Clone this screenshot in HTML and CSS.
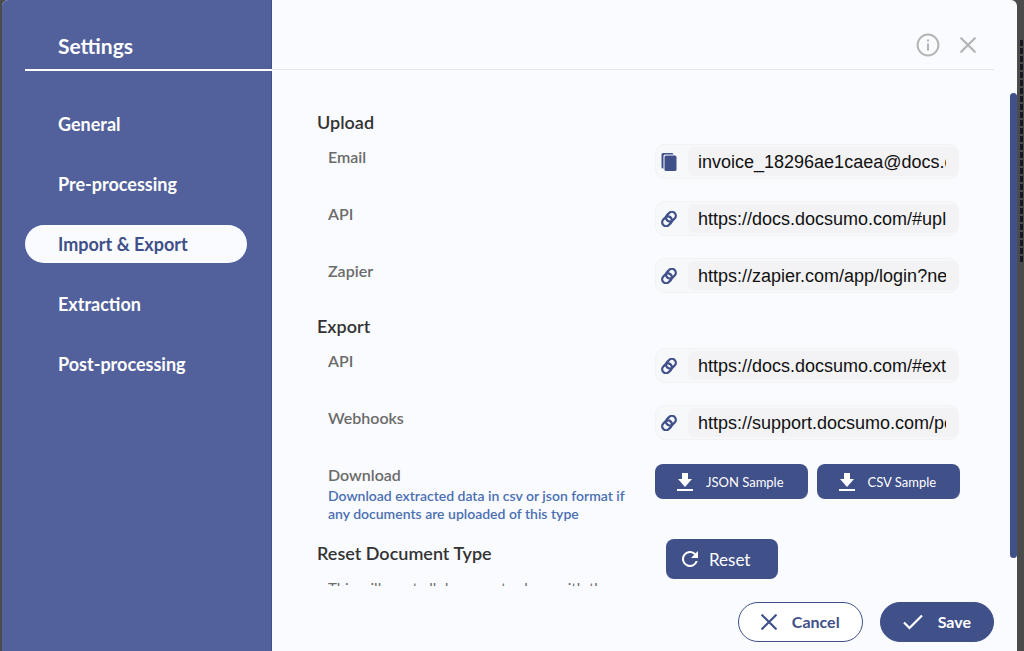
FILE: index.html
```html
<!DOCTYPE html>
<html lang="en">
<head>
  <meta charset="UTF-8">
  <meta name="viewport" content="width=device-width, initial-scale=1.0">
  <title>Settings</title>
  <link rel="stylesheet" href="styles.css">
</head>
<body>

  <svg class="sprite" aria-hidden="true">
    <symbol id="icon-link" viewBox="0 0 16 16">
      <g fill="none" stroke="currentColor" stroke-width="2.3">
        <rect x="4.700" y="1.800" width="10.500" height="7.800" rx="3.900" transform="rotate(-45 9.950 5.700)"/>
        <rect x="0.800" y="6.400" width="10.500" height="7.800" rx="3.900" transform="rotate(-45 6.050 10.300)"/>
      </g>
    </symbol>
    <symbol id="icon-download" viewBox="0 0 16 18">
      <path fill="currentColor" d="M5 0h6v6h4l-7 8-7-8h4zM0 16h16v2H0z"/>
    </symbol>
    <symbol id="icon-close" viewBox="0 0 16 16">
      <path fill="none" stroke="currentColor" stroke-width="2.2" stroke-linecap="round" d="M1.2 1.2l13.6 13.6M14.8 1.2L1.2 14.8"/>
    </symbol>
  </svg>

  <div class="page-dashes"></div>

  <div class="modal">
    <aside class="sidebar">
      <h1 class="sidebar-title">Settings</h1>
      <nav class="menu">
        <a href="#">General</a>
        <a href="#">Pre-processing</a>
        <a href="#" class="active">Import &amp; Export</a>
        <a href="#">Extraction</a>
        <a href="#">Post-processing</a>
      </nav>
    </aside>

    <main class="main">
      <header class="header">
        <button class="icon-btn" aria-label="Info">
          <svg width="24" height="24" viewBox="0 0 24 24" fill="none" stroke="currentColor" stroke-width="2">
            <circle cx="12" cy="12" r="10.4"/>
            <path d="M12 10.5v7M12 6.5v2"/>
          </svg>
        </button>
        <button class="icon-btn" aria-label="Close">
          <svg width="16" height="16"><use href="#icon-close"/></svg>
        </button>
      </header>

      <div class="body">
        <div class="content">
          <h2>Upload</h2>
          <div class="row">
            <label for="email">Email</label>
            <div class="control">
              <div class="field">
                <svg width="16" height="18" viewBox="0 0 16 18" fill="currentColor">
                  <path d="M2 0h9a1.500 1.500 0 0 1 1.500 1.500H4A1.500 1.500 0 0 0 2.500 3v12.500H2A1.500 1.500 0 0 1 .5 14V1.500A1.500 1.500 0 0 1 2 0z"/>
                  <rect x="3.500" y="2.500" width="12" height="15.500" rx="1.500"/>
                </svg>
                <input type="text" id="email" value="invoice_18296ae1caea@docs.docsumo.com" readonly>
              </div>
            </div>
          </div>
          <div class="row">
            <label for="upload-api">API</label>
            <div class="control">
              <div class="field">
                <svg width="16" height="16"><use href="#icon-link"/></svg>
                <input type="text" id="upload-api" value="https://docs.docsumo.com/#upload" readonly>
              </div>
            </div>
          </div>
          <div class="row">
            <label for="zapier">Zapier</label>
            <div class="control">
              <div class="field">
                <svg width="16" height="16"><use href="#icon-link"/></svg>
                <input type="text" id="zapier" value="https://zapier.com/app/login?next=" readonly>
              </div>
            </div>
          </div>

          <h2>Export</h2>
          <div class="row">
            <label for="export-api">API</label>
            <div class="control">
              <div class="field">
                <svg width="16" height="16"><use href="#icon-link"/></svg>
                <input type="text" id="export-api" value="https://docs.docsumo.com/#extract" readonly>
              </div>
            </div>
          </div>
          <div class="row">
            <label for="webhooks">Webhooks</label>
            <div class="control">
              <div class="field">
                <svg width="16" height="16"><use href="#icon-link"/></svg>
                <input type="text" id="webhooks" value="https://support.docsumo.com/portal" readonly>
              </div>
            </div>
          </div>
          <div class="row download">
            <div class="text">
              <div class="label">Download</div>
              <p class="hint">Download extracted data in csv or json format if any documents are uploaded of this type</p>
            </div>
            <div class="control samples">
              <button class="btn sample">
                <svg width="16" height="18"><use href="#icon-download"/></svg>
                JSON Sample
              </button>
              <button class="btn sample">
                <svg width="16" height="18"><use href="#icon-download"/></svg>
                CSV Sample
              </button>
            </div>
          </div>

          <div class="reset-section">
            <div class="text">
              <h2>Reset Document Type</h2>
              <p class="note">This will reset all documents along with the</p>
            </div>
            <div class="control">
              <button class="btn reset">
                <svg width="16" height="16" viewBox="0 0 16 16">
                  <path fill="currentColor" d="M13.650 2.350A8 8 0 1 0 15.730 10h-2.080A6 6 0 1 1 8 2c1.660 0 3.140.690 4.220 1.780L9 7h7V0z"/>
                </svg>
                Reset
              </button>
            </div>
          </div>
        </div>
        <div class="scrollbar"><div class="thumb"></div></div>
      </div>

      <footer class="footer">
        <button class="pill cancel">
          <svg width="16" height="16"><use href="#icon-close"/></svg>
          Cancel
        </button>
        <button class="pill save">
          <svg width="20" height="16" viewBox="0 0 20 16" fill="none" stroke="currentColor" stroke-width="2.200">
            <path d="M1 8.500l5.500 5.500L19 1.500"/>
          </svg>
          Save
        </button>
      </footer>
    </main>
  </div>

</body>
</html>
```
FILE: styles.css
```css
* {
  box-sizing: border-box;
}

body {
  margin: 0;
  padding: 0 7px 0 2px;
  height: 100vh;
  overflow: hidden;
  background-color: #4b4b4b;
  font-family: Lato, sans-serif;
}

h1, h2, p {
  margin: 0;
}

button {
  font-family: inherit;
  cursor: pointer;
}

.sprite {
  position: absolute;
  width: 0;
  height: 0;
}

/* dashed outline of the page behind the modal */
.page-dashes {
  position: absolute;
  top: 40px;
  right: 1px;
  width: 3px;
  height: 222px;
  background: repeating-linear-gradient(#171822 0 6px, #4b4b4b 6px 8px);
}

.modal {
  display: flex;
  height: 100%;
  background-color: #fafbfe;
  border-radius: 6px 6px 0 0;
  overflow: hidden;
}

/* sidebar */
.sidebar {
  width: 270px;
  flex-shrink: 0;
  padding-left: 23px;
  background-color: #52619b;
  box-shadow: inset -1px 0 #405089;
  color: #fff;
}

.sidebar-title {
  height: 71px;
  padding: 33px 0 0 33px;
  border-bottom: 2px solid #fff;
  font-size: 21px;
  line-height: 26px;
  font-weight: 700;
}

.menu {
  display: flex;
  flex-direction: column;
  gap: 22px;
  padding: 34px 25px 0 0;
}

.menu a {
  padding-left: 33px;
  border-radius: 19px;
  color: #fff;
  font-size: 18px;
  line-height: 38px;
  font-weight: 700;
  text-decoration: none;
}

.menu a.active {
  background-color: #fafbfe;
  color: #405089;
}

/* main */
.main {
  flex: 1;
  min-width: 0;
  display: flex;
  flex-direction: column;
}

.header {
  display: flex;
  justify-content: flex-end;
  align-items: center;
  gap: 20px;
  height: 70px;
  margin-right: 23px;
  padding: 20px 18px 0 0;
  border-bottom: 1px solid #e6e7ea;
}

.icon-btn {
  display: flex;
  padding: 0;
  border: none;
  background: none;
  color: #b4b4b4;
}

.body {
  flex: 1;
  min-height: 0;
  display: flex;
  overflow: hidden;
}

.content {
  flex: 1;
  padding: 41px 48px 0 45px;
}

.content h2 {
  margin-bottom: 11px;
  color: #333;
  font-size: 18px;
  line-height: 22px;
  font-weight: 600;
}

.row,
.reset-section {
  display: flex;
  justify-content: space-between;
}

.row {
  margin-bottom: 22px;
  padding-left: 11px;
}

.row label,
.label {
  color: #6b6b6b;
  font-size: 16px;
  line-height: 25px;
  font-weight: 600;
}

.download {
  margin-bottom: 16px;
}

.download .text {
  width: 300px;
}

.hint {
  color: #4a6fb3;
  font-size: 14px;
  line-height: 18px;
  font-weight: 600;
}

.control {
  width: 307px;
  flex-shrink: 0;
}

.field {
  display: flex;
  align-items: center;
  width: 304px;
  height: 35px;
  padding-left: 5px;
  border: 1px solid #f1f2f4;
  border-radius: 10px;
  background-color: #f7f8fa;
  color: #405089;
}

.field input {
  flex: 1;
  min-width: 0;
  height: 29px;
  margin-left: 11px;
  padding: 1px 12px 0 10px;
  border: none;
  border-radius: 6px;
  background-color: #f3f3f5;
  color: #111;
  font-family: "Liberation Sans", Arial, sans-serif;
  font-size: 18px;
  outline: none;
}

.btn {
  display: flex;
  align-items: center;
  border: none;
  border-radius: 8px;
  background-color: #405089;
  color: #fff;
  white-space: nowrap;
}

.samples {
  display: flex;
  gap: 9px;
  padding-top: 2px;
}

.sample {
  gap: 13px;
  height: 35px;
  padding: 0 24px 0 22px;
  font-size: 13px;
}

.reset-section .text {
  padding-top: 3px;
}

.note {
  padding-left: 11px;
  color: #6b6b6b;
  font-size: 15px;
  line-height: 26px;
}

.reset {
  gap: 11px;
  height: 40px;
  margin-left: 11px;
  padding: 0 28px 0 16px;
  font-size: 17px;
}

.scrollbar {
  width: 7px;
  padding-top: 23px;
}

.thumb {
  height: 465px;
  border-radius: 4px;
  background-color: #405089;
}

/* footer */
.footer {
  display: flex;
  justify-content: flex-end;
  gap: 17px;
  padding: 16px 23px 9px 0;
}

.pill {
  display: flex;
  align-items: center;
  gap: 15px;
  height: 40px;
  padding: 0 22px;
  border: 1px solid #405089;
  border-radius: 20px;
  font-size: 16px;
  line-height: 20px;
  font-weight: 700;
}

.cancel {
  background-color: #fff;
  color: #405089;
}

.save {
  background-color: #405089;
  color: #fff;
}
```
